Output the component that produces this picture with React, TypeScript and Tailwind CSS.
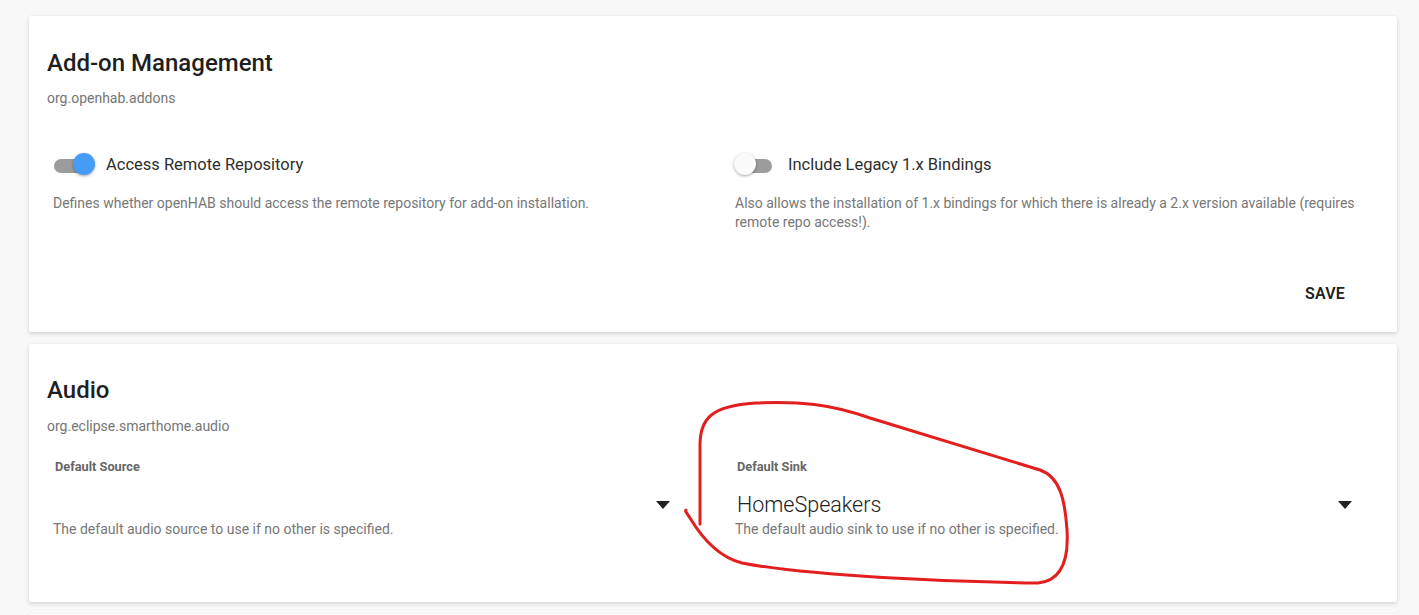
import React from "react";

const Toggle = ({ on }: { on: boolean }) => {
  return (
    <div className="relative w-[46px] h-6 shrink-0">
      <div className="absolute left-[1px] top-[6px] w-[36px] h-[14px] rounded-full bg-[#9c9c9c]" />
      <div
        className={
          on
            ? "absolute left-[20px] top-0 w-[22px] h-[22px] rounded-full bg-[#479cf7] shadow-[0_1px_3px_rgba(0,0,0,0.35)]"
            : "absolute left-[-1px] top-0 w-[22px] h-[22px] rounded-full bg-[#fafafa] shadow-[0_1px_3px_rgba(0,0,0,0.35)]"
        }
      />
    </div>
  );
};

const Arrow = () => (
  <svg width="14" height="8" viewBox="0 0 14 8" className="shrink-0">
    <polygon points="0,0 14,0 7,8" fill="#222" />
  </svg>
);

const SwitchField = ({
  label,
  desc,
  on,
}: {
  label: string;
  desc: string;
  on: boolean;
}) => (
  <div>
    <div className="flex items-center h-6">
      <Toggle on={on} />
      <span className="ml-[7px] text-[16.5px] text-[#2e2e2e]">{label}</span>
    </div>
    <p className="mt-[17px] text-[14px] leading-[19px] text-[#777]">{desc}</p>
  </div>
);

const SelectField = ({
  label,
  value,
  desc,
}: {
  label: string;
  value: string;
  desc: string;
}) => (
  <div className="w-[617px]">
    <div className="ml-[2px] text-[12.75px] leading-4 font-bold text-[#666]">{label}</div>
    <div className="mt-[15px] h-[30px] flex items-center justify-between">
      <span className="ml-[2px] text-[21.5px] font-light text-[#222]">{value}</span>
      <Arrow />
    </div>
    <p className="text-[14px] leading-[18px] text-[#777]">{desc}</p>
  </div>
);

const card =
  "shrink-0 bg-white rounded-[2px] shadow-[0_2px_4px_rgba(0,0,0,0.14),0_0_2px_rgba(0,0,0,0.06)] pl-[18px] pr-[18px]";

export default function App() {
  return (
    <div
      className="relative bg-[#f8f8f8] pt-4 pl-[29px] pr-[22px] flex flex-col gap-3 overflow-hidden h-[615px]"
      style={{ fontFamily: "Roboto, 'Noto Sans', sans-serif" }}
    >
      <div className={card + " h-[316px] pt-[33px] flex flex-col"}>
        <h2 className="text-[24px] leading-7 font-medium text-[#1f1f1f]">Add-on Management</h2>
        <div className="mt-3 text-[14px] leading-[18px] text-[#757575]">org.openhab.addons</div>
        <div className="mt-[46px] pl-[6px] grid grid-cols-[682px_640px]">
          <SwitchField
            on={true}
            label="Access Remote Repository"
            desc="Defines whether openHAB should access the remote repository for add-on installation."
          />
          <SwitchField
            on={false}
            label="Include Legacy 1.x Bindings"
            desc="Also allows the installation of 1.x bindings for which there is already a 2.x version available (requires remote repo access!)."
          />
        </div>
        <div className="mt-auto mb-[26px] flex justify-end pr-[34px]">
          <button className="text-[16px] font-semibold text-[#222] uppercase tracking-[0.2px]">Save</button>
        </div>
      </div>

      <div className={card + " h-[258px] pt-8"}>
        <h2 className="text-[24px] leading-7 font-medium text-[#1f1f1f]">Audio</h2>
        <div className="mt-[13px] text-[14px] leading-[18px] text-[#757575]">org.eclipse.smarthome.audio</div>
        <div className="mt-6 pl-[6px] grid grid-cols-[682px_640px]">
          <SelectField
            label="Default Source"
            value=""
            desc="The default audio source to use if no other is specified."
          />
          <SelectField
            label="Default Sink"
            value="HomeSpeakers"
            desc="The default audio sink to use if no other is specified."
          />
        </div>
      </div>

      <div className={card + " h-[60px]"} />

      <svg
        className="absolute left-0 top-0 pointer-events-none"
        width="1419"
        height="615"
        viewBox="0 0 1419 615"
      >
        <path
          d="M 700 524 L 700 445 C 700 418, 712 406, 755 403 C 800 401, 830 404, 870 418 L 1040 470 C 1060 477, 1065 500, 1067 530 C 1069 562, 1060 581, 1038 583 C 950 582, 810 576, 742 563 C 718 557, 702 538, 690 518 C 686 512, 685 511, 686 510"
          fill="none"
          stroke="#e31e1e"
          strokeWidth="3"
          strokeLinecap="round"
          strokeLinejoin="round"
        />
      </svg>
    </div>
  );
}
